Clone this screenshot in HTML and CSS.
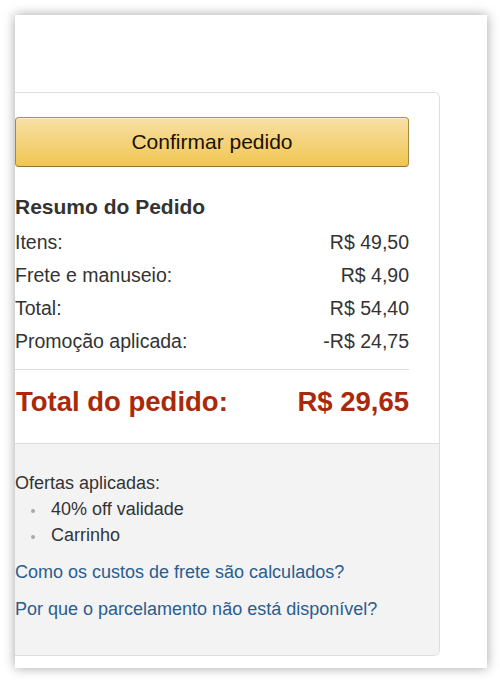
FILE: index.html
```html
<!DOCTYPE html>
<html lang="pt-BR">
<head>
<meta charset="utf-8">
<title>Resumo do Pedido</title>
<link rel="stylesheet" href="styles.css">
</head>
<body>
<div class="frame">
  <div class="box">
    <div class="summary">
      <button class="confirm" type="button">Confirmar pedido</button>
      <h3 class="heading">Resumo do Pedido</h3>
      <div class="row"><span>Itens:</span><span>R$ 49,50</span></div>
      <div class="row"><span>Frete e manuseio:</span><span>R$ 4,90</span></div>
      <div class="row"><span>Total:</span><span>R$ 54,40</span></div>
      <div class="row"><span>Promoção aplicada:</span><span>-R$ 24,75</span></div>
      <hr class="divider">
      <div class="grand"><span>Total do pedido:</span><span>R$ 29,65</span></div>
    </div>
    <div class="extra">
      <div class="offers-title">Ofertas aplicadas:</div>
      <ul class="offers">
        <li>40% off validade</li>
        <li>Carrinho</li>
      </ul>
      <a class="link" href="#">Como os custos de frete são calculados?</a>
      <a class="link" href="#">Por que o parcelamento não está disponível?</a>
    </div>
  </div>
</div>
</body>
</html>
```
FILE: styles.css
```css
html, body {
  margin: 0;
  padding: 0;
  background: #ffffff;
}

body {
  font-family: "Liberation Sans", Arial, sans-serif;
  color: #333333;
}

.frame {
  margin: 15px 13px 14px 15px;
  width: 472px;
  height: 653px;
  box-sizing: border-box;
  padding-top: 77px;
  background: #ffffff;
  box-shadow: 0 0 11px rgba(0, 0, 0, 0.36);
  overflow: hidden;
}

.box {
  width: 425px;
  box-sizing: border-box;
  border: 1px solid #dddddd;
  border-left: none;
  border-radius: 0 6px 6px 0;
  overflow: hidden;
}

.summary {
  padding: 24px 30px 25px 0;
  background: #ffffff;
}

.confirm {
  display: block;
  width: 100%;
  height: 50px;
  margin: 0;
  padding: 0;
  box-sizing: border-box;
  border: 1px solid;
  border-color: #b39344 #a88a3f #8f7431;
  border-radius: 4px;
  background: linear-gradient(to bottom, #f8e0a6 0%, #f0c651 100%);
  box-shadow: inset 0 1px 0 rgba(255, 255, 255, 0.45);
  font-family: "Liberation Sans", Arial, sans-serif;
  font-size: 21px;
  color: #1a1200;
  cursor: pointer;
}

.heading {
  margin: 28px 0 7px;
  font-size: 21px;
  line-height: 24px;
  font-weight: bold;
  color: #333333;
}

.row {
  display: flex;
  justify-content: space-between;
  font-size: 19.5px;
  line-height: 33px;
  color: #333333;
}

.divider {
  margin: 11px 0 0;
  border: 0;
  border-top: 1px solid #dddddd;
  height: 0;
}

.grand {
  display: flex;
  justify-content: space-between;
  margin-top: 16px;
  padding-left: 1px;
  font-size: 27.5px;
  line-height: 32px;
  font-weight: bold;
  color: #a8290b;
}

.extra {
  border-top: 1px solid #dddddd;
  background: #f3f3f3;
  padding: 26px 30px 33px 0;
  font-size: 18px;
  line-height: 26px;
}

.offers-title {
  color: #333333;
}

.offers {
  list-style: none;
  margin: 0;
  padding: 0;
  color: #333333;
}

.offers li {
  display: flex;
  align-items: center;
}

.offers li::before {
  content: "";
  width: 4px;
  height: 4px;
  border-radius: 50%;
  background: #a8a8a8;
  margin: 4px 16px 0 16px;
}

.link {
  display: block;
  margin-top: 11px;
  color: #2b5d8e;
  text-decoration: none;
}
```
